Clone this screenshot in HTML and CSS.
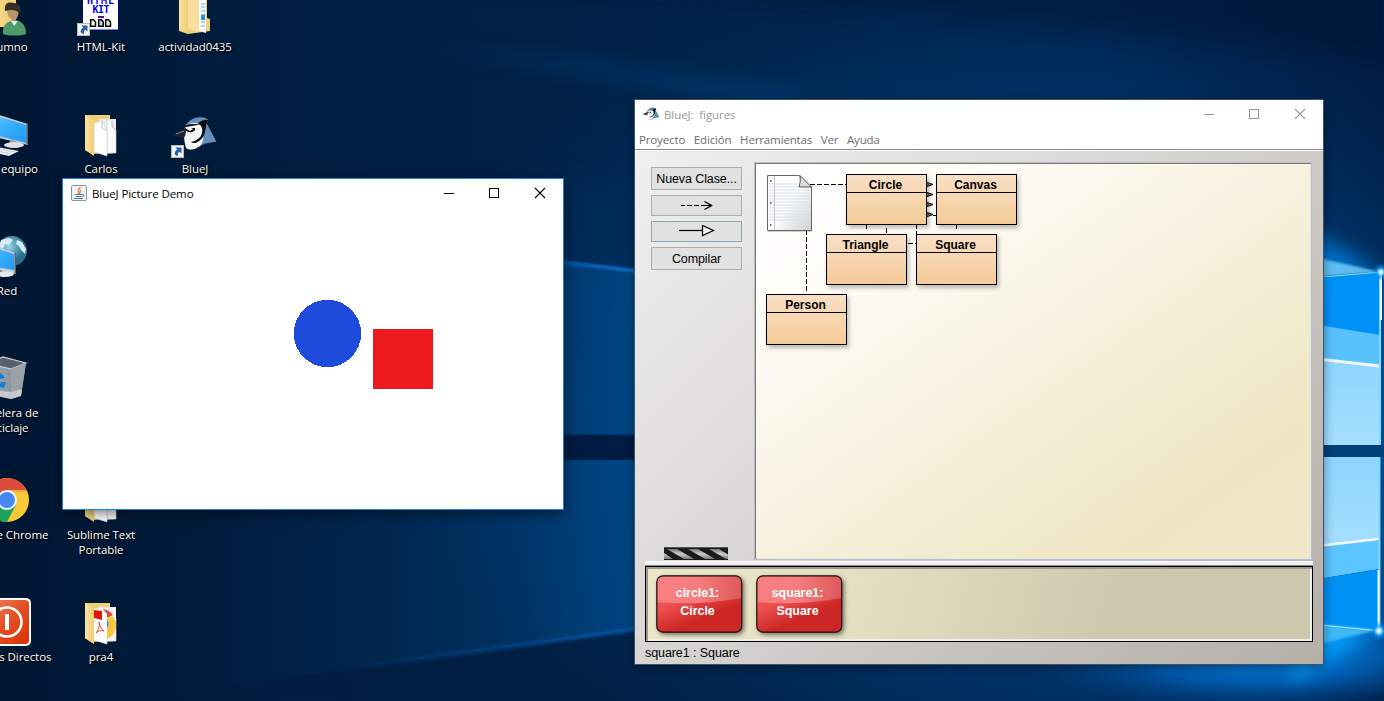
FILE: index.html
```html
<!DOCTYPE html>
<html lang="es">
<head>
<meta charset="utf-8">
<title>Escritorio</title>
<link rel="stylesheet" href="styles.css">
</head>
<body>
<div class="desktop">
  <svg class="wallpaper" width="1384" height="701" viewBox="0 0 1384 701" aria-hidden="true">
    <defs>
      <linearGradient id="sky" x1="0" y1="0" x2="1" y2="0">
        <stop offset="0" stop-color="#001733"/><stop offset=".2" stop-color="#001d3f"/><stop offset=".5" stop-color="#00234a"/><stop offset=".8" stop-color="#002450"/><stop offset="1" stop-color="#001c42"/>
      </linearGradient>
      <radialGradient id="glow" gradientUnits="userSpaceOnUse" cx="1010" cy="400" r="620" gradientTransform="translate(0 130) scale(1 .68)">
        <stop offset="0" stop-color="#005aa6"/><stop offset=".5" stop-color="#00478a" stop-opacity=".7"/><stop offset="1" stop-color="#003a75" stop-opacity="0"/>
      </radialGradient>
      <linearGradient id="pane" x1="0" y1="0" x2="1" y2="0">
        <stop offset="0" stop-color="#00356b" stop-opacity="0"/><stop offset=".7" stop-color="#004684" stop-opacity=".45"/><stop offset="1" stop-color="#005095" stop-opacity=".8"/>
      </linearGradient>
      <linearGradient id="ray" x1="0" y1="0" x2="1" y2="0">
        <stop offset="0" stop-color="#0a6fd8" stop-opacity="0"/><stop offset="1" stop-color="#0a78e0"/>
      </linearGradient>
      <linearGradient id="shade" x1="0" y1="0" x2="1" y2="0"><stop offset="0" stop-color="#001b3d" stop-opacity=".3"/><stop offset=".5" stop-color="#001b3d" stop-opacity=".35"/><stop offset="1" stop-color="#001b3d" stop-opacity="0"/></linearGradient>
      <radialGradient id="flare"><stop offset="0" stop-color="#fff"/><stop offset=".2" stop-color="#b5ecff"/><stop offset=".5" stop-color="#0a9cff" stop-opacity=".7"/><stop offset="1" stop-color="#0078e0" stop-opacity="0"/></radialGradient>
      <radialGradient id="floor"><stop offset="0" stop-color="#008cf5"/><stop offset=".5" stop-color="#0068c4" stop-opacity=".75"/><stop offset="1" stop-color="#004a94" stop-opacity="0"/></radialGradient>
      <linearGradient id="glass" x1="0" y1="0" x2="0" y2="1"><stop offset="0" stop-color="#8ed5ff"/><stop offset="1" stop-color="#a6dfff"/></linearGradient>
      <filter id="soft" x="-20%" y="-50%" width="140%" height="200%"><feGaussianBlur stdDeviation="9"/></filter>
      <filter id="soft1" x="-20%" y="-50%" width="140%" height="200%"><feGaussianBlur stdDeviation="1"/></filter>
    </defs>
    <rect width="1384" height="701" fill="url(#sky)"/>
    <rect width="1384" height="701" fill="url(#glow)"/>
    <path d="M380 -20L1384 -20V60L900 10Z" fill="#001531" opacity=".5" filter="url(#soft)"/>
    <path d="M420 45L800 118V90L600 60Z" fill="#004a8c" opacity=".3" filter="url(#soft)"/>
    <path d="M560 170L660 200V272L560 262Z" fill="#002a58" opacity=".5" filter="url(#soft)"/>
    <path d="M300 225L660 272V435H300Z" fill="url(#pane)"/>
    <path d="M450 248L660 272V275L450 252Z" fill="url(#ray)" filter="url(#soft1)"/>
    <rect y="435" width="700" height="25" fill="#001737" opacity=".78" filter="url(#soft1)"/>
    <path d="M200 460H660V626L200 690Z" fill="url(#pane)"/>
    <path d="M200 690L660 625H1100V701H200Z" fill="url(#shade)"/>
    <path d="M330 669L660 624V628L330 675Z" fill="url(#ray)" opacity=".5" filter="url(#soft1)"/>
    <ellipse cx="1265" cy="655" rx="235" ry="58" fill="url(#floor)"/>
    <path d="M1300 225L1381 270L1300 290Z" fill="#0088ed" opacity=".7" filter="url(#soft)"/>
    <path d="M1290 682L1381 631L1300 620Z" fill="#00a0ff" opacity=".9" filter="url(#soft)"/>
    <path d="M1300 254L1381 272L1300 278Z" fill="#75d3ff" opacity=".8" filter="url(#soft1)"/>
    <rect x="1381" y="276" width="3" height="354" fill="#004b91"/>
    <path d="M1300 280L1381 272V340L1300 326Z" fill="#0092f8"/>
    <path d="M1300 322L1380 335V368H1300Z" fill="#58c2ff"/>
    <path d="M1300 358L1380 367V445H1300Z" fill="url(#glass)"/>
    <path d="M1300 357L1380 366" stroke="#fff" stroke-width="3" opacity=".9"/>
    <rect x="1300" y="445" width="84" height="12" fill="#00407c"/>
    <path d="M1300 457H1380V540L1300 548Z" fill="url(#glass)"/>
    <path d="M1300 548L1380 540V569L1300 582Z" fill="#5cc4ff"/>
    <path d="M1300 582L1380 569V632L1300 624Z" fill="#0091f5"/>
    <path d="M1300 548L1379 539" stroke="#fff" stroke-width="2.5" opacity=".9"/>
    <path d="M1300 622L1380 630L1300 648Z" fill="#54c8ff" opacity=".75" filter="url(#soft1)"/>
    <path d="M1300 279L1381 272" stroke="#81e4ff"/>
    <path d="M1300 623L1381 631" stroke="#9bedff"/>
    <path d="M1380 272V445M1379.500 457V630" stroke="#7fdcff" stroke-width="2"/>
    <path d="M1381 272V320M1378.500 570V632" stroke="#e8fbff" stroke-width="2"/>
    <circle cx="1381" cy="272" r="9" fill="url(#flare)"/>
    <circle cx="1379" cy="631" r="10" fill="url(#flare)"/>
  </svg>

  <svg width="0" height="0" class="defs" aria-hidden="true">
    <defs>
      <linearGradient id="fold" x1="0" y1="0" x2="1" y2="0"><stop offset="0" stop-color="#fbe3a0"/><stop offset="1" stop-color="#f1cd74"/></linearGradient>
      <linearGradient id="screen" x1="0" y1="0" x2="1" y2="1"><stop offset="0" stop-color="#8ad4ff"/><stop offset=".5" stop-color="#38aefc"/><stop offset="1" stop-color="#1e9bf5"/></linearGradient>
      <linearGradient id="power" x1="0" y1="0" x2="1" y2="1"><stop offset="0" stop-color="#f08a68"/><stop offset=".5" stop-color="#e35025"/><stop offset="1" stop-color="#d83200"/></linearGradient>
      <linearGradient id="binfill" x1="0" y1="0" x2="1" y2="0"><stop offset="0" stop-color="#a7adb3"/><stop offset="1" stop-color="#7d868e"/></linearGradient>
      <radialGradient id="globe" cx=".4" cy=".35"><stop offset="0" stop-color="#9fd3e6"/><stop offset=".6" stop-color="#4f9ab8"/><stop offset="1" stop-color="#2c6d8c"/></radialGradient>
      <symbol id="shortcut" viewBox="0 0 13 13">
        <rect x=".5" y=".5" width="12" height="12" fill="#f4f4f4" stroke="#b9b9b9"/>
        <path d="M4.500 2.500H10.500V8.500L8.500 6.800C7 7.500 6.500 9 7 11C3 10.500 2.500 7 6.200 4.500Z" fill="#2c62a8"/>
      </symbol>
      <symbol id="folder" viewBox="0 0 48 48">
        <path d="M8 5H33V42L17 44L8 40Z" fill="#efcf79"/>
        <path d="M22 9H39V43L24 44Z" fill="#e9ebed"/>
        <path d="M30 10H35V16L39 20V43H30Z" fill="#fbfbfb" stroke="#cfd1d3" stroke-width=".6"/>
        <path d="M17 13L25 11L30 20V46L17 42Z" fill="#fff" stroke="#c9cbcd" stroke-width=".6"/>
        <path d="M25 11V18L30 20M35 11V17L39 20" fill="none" stroke="#b7babc" stroke-width=".8"/>
        <path d="M8 5L17 12V46L8 40Z" fill="url(#fold)"/>
      </symbol>
      <symbol id="jay" viewBox="0 0 48 48">
        <path d="M14 16C18 9 25 6 31 7C34 7 36 8 38 10L36 13L46 32L34 34L24 39L18 40L32 24L30 14Z" fill="#6390bd" stroke="#0c141c" stroke-width=".8"/>
        <path d="M14 17C12 23 13 31 15 38C19 41 25 39 29 36C34 30 33 20 29 14C23 12 17 13 14 17Z" fill="#f6f7f8"/>
        <path d="M38 10C32 9 28 12 27 14C31 15 32 18 31 23C30 28 25 31 20 32C22 34 26 33 28 31C34 27 34 21 35 18C35 14 36 12 38 10Z" fill="#0b0d10"/>
        <path d="M13 18C17 12 24 15 30 14C27 16 19 15 13 18Z" fill="#0b0d10"/>
        <path d="M14 18L19 21L22 19L20 18H24V20C22 23 17 23 14 20Z" fill="#101214"/>
        <path d="M15 18L2 25C6 28 10 26 13 28C15 25 15 21 15 18Z" fill="#1d2228"/>
        <path d="M5 24L13 21" stroke="#868c92" fill="none"/>
      </symbol>
      <linearGradient id="gloss" x1="0" y1="0" x2="1" y2="0"><stop offset="0" stop-color="#fa8080"/><stop offset=".5" stop-color="#f57d7d"/><stop offset="1" stop-color="#de5858"/></linearGradient>
      <linearGradient id="gem" x1="0" y1="0" x2=".6" y2="1"><stop offset="0" stop-color="#fa6a6a"/><stop offset=".45" stop-color="#ee5050"/><stop offset=".8" stop-color="#cc2626"/></linearGradient>
    </defs>
  </svg>

  <div class="icons">
    <div class="icon c1 r1">
      <svg width="48" height="48" viewBox="0 0 48 48">
        <path d="M4 0H33V36L4 39Z" fill="#f3d27e"/><path d="M4 0H26V39H4Z" fill="url(#fold)"/>
        <path d="M20 46C19 36 25 33 32 32C39 33 43 37 43 46C38 48 26 48 20 46Z" fill="#4e9a6d"/><path d="M28 33L31 38L35 33Z" fill="#e2efe4"/>
        <path d="M24 20C24 14 36 14 36 21C36 27 34 31 31 33C26 31 24 27 24 20Z" fill="#b8946f"/><path d="M22 23C21 14 26 14 31 15C38 15 39 23 36 26C35 22 29 21 22 23Z" fill="#35302c"/>
      </svg>
      <span class="label">Alumno</span>
    </div>
    <div class="icon c1 r2">
      <svg width="48" height="48" viewBox="0 0 48 48">
        <path d="M0 0L45 14V35L0 24Z" fill="#c7ccd0"/><path d="M0 2L43.500 15V33L0 22Z" fill="url(#screen)"/><path d="M43.500 14L45 14.500V35L43.500 34Z" fill="#545b61"/>
        <path d="M27 29L33 31V34L27 33Z" fill="#9aa0a5"/><ellipse cx="31" cy="35" rx="10" ry="3" fill="#dfe2e5"/>
        <path d="M4 35L36 41L26 46L0 40Z" fill="#eceff1"/><path d="M8 37L32 42M6 39L28 44" stroke="#b8bdc1" stroke-dasharray="2 1"/>
      </svg>
      <span class="label">Este equipo</span>
    </div>
    <div class="icon c1 r3">
      <svg width="48" height="48" viewBox="0 0 48 48">
        <circle cx="29" cy="19" r="15" fill="url(#globe)"/><path d="M18 8L26 6L30 8L26 13L22 12L20 17L16 15ZM34 8L39 10L43 17L42 22L38 18L36 14L33 12Z" fill="#d6ecf3"/>
        <path d="M0 10L33 21V42L0 35Z" fill="#c9ced2"/><path d="M0 12L31 22V38L0 33Z" fill="url(#screen)"/><path d="M31.500 20L33 21V42L31.500 41Z" fill="#596168"/><ellipse cx="22" cy="42" rx="9" ry="3" fill="#e5e8ea"/>
      </svg>
      <span class="label">Red</span>
    </div>
    <div class="icon c1 r4">
      <svg width="48" height="48" viewBox="0 0 48 48">
        <path d="M4 9L20 3L43 9L38 41L28 45L9 41Z" fill="url(#binfill)"/><path d="M4 9L20 3L43 9L28 15Z" fill="#59626a" stroke="#cdd2d6" stroke-width="1.200"/><path d="M28 15L43 9L38 42L28 45Z" fill="#99a0a7"/><path d="M10 36L28 38L39 35L38 42L28 45L10 41Z" fill="#d5d8db" opacity=".75"/>
        <path d="M13 20L17 18L22 24L17 25ZM18 28L23 28L21 34L16 33ZM7 25L11 24L14 31L9 31Z" fill="#0d82e0"/>
      </svg>
      <span class="label">Papelera de<br>reciclaje</span>
    </div>
    <div class="icon c1 r5">
      <svg width="48" height="48" viewBox="0 0 48 48">
        <circle cx="24" cy="24" r="22" fill="#fbc938"/><path d="M5 13A22 22 0 0 1 43.300 14H24L14 28Z" fill="#dd4b3e"/><path d="M5 13A22 22 0 0 0 24 46L33.500 28L15 30Z" fill="#1ba25d"/><path d="M24 14H43.300L44 16H34Z" fill="#d4a52c" opacity=".6"/><circle cx="24" cy="24" r="10" fill="#f4f4f4"/><circle cx="24" cy="24" r="8" fill="#4688f1"/>
      </svg>
      <span class="label">Google Chrome</span>
    </div>
    <div class="icon c1 r6">
      <svg width="48" height="48" viewBox="0 0 48 48">
        <rect x="0" y="0" width="48" height="48" rx="5" fill="#fff"/><rect x="2" y="2" width="44" height="44" rx="4" fill="url(#power)"/><circle cx="24" cy="24" r="14.500" fill="none" stroke="#fff" stroke-width="2.500"/><rect x="22" y="16" width="4" height="16" fill="#fff"/>
      </svg>
      <span class="label">Accesos Directos</span>
    </div>

    <div class="icon c2 r1">
      <svg width="48" height="48" viewBox="0 0 48 48">
        <rect x="5.500" y="-2" width="36" height="44" fill="#fff" stroke="#000a80"/><text x="10" y="16" class="kit" textLength="27">HTML</text><text x="15.500" y="25" class="kit" textLength="17">KIT</text>
        <rect x="21" y="28" width="6" height="2" fill="#800080"/>
        <g fill="#f6f6dc" stroke="#000" stroke-width="1.500"><path d="M13.700 31.700H16.500L18.500 34V38.300H13.700Z"/><path d="M21.700 31.700H24.500L26.300 34V38.300H21.700Z" fill="#bcd3f4"/><path d="M28.700 31.700H31.500L33.500 34V38.300H28.700Z" fill="#dff4df"/></g>
        <use href="#shortcut" x="0" y="35" width="13" height="13"/>
      </svg>
      <span class="label">HTML-Kit</span>
    </div>
    <div class="icon c2 r2">
      <svg width="48" height="48" viewBox="0 0 48 48"><use href="#folder"/></svg>
      <span class="label">Carlos</span>
    </div>
    <div class="icon c2 r5">
      <svg width="48" height="48" viewBox="0 0 48 48"><use href="#folder"/></svg>
      <span class="label">Sublime Text<br>Portable</span>
    </div>
    <div class="icon c2 r6">
      <svg width="48" height="48" viewBox="0 0 48 48"><use href="#folder"/>
        <path d="M24 10H39V43H30Z" fill="#f4f4f4"/><path d="M24 11A14 14 0 0 1 36 17L30 20Z" fill="#dd4b3e"/><path d="M30 19H36.500A15 15 0 0 1 30 41Z" fill="#fbc938"/><path d="M30 22A4 5 0 0 1 30 30Z" fill="#4688f1"/>
        <path d="M17 11L25 10L30 16V46L17 42Z" fill="#fdfdfd"/><path d="M17 12L25 13V22L17 20Z" fill="#e1180c"/><path d="M19 35C22 31 23 27 22 24C23 29 25 32 27 33C24 32 21 33 19 35Z" fill="none" stroke="#e9483d"/>
        <path d="M8 5L17 12V46L8 40Z" fill="url(#fold)"/>
      </svg>
      <span class="label">pra4</span>
    </div>

    <div class="icon c3 r1">
      <svg width="48" height="48" viewBox="0 0 48 48">
        <path d="M8 0H36V30L39 31V43L17 46L8 43Z" fill="#efcf79"/><path d="M28 4L35 12V45L28 43Z" fill="#f7f8f9"/><path d="M30 16H34M30 19H34M30 23H34M30 34H34M30 38H34" stroke="#79b5d8"/><path d="M30 27L34 26V32H30Z" fill="#2a8fd0"/><path d="M17 0H28V44L17 41Z" fill="#f9df9d"/><path d="M8 0L17 5V46L8 41Z" fill="url(#fold)"/>
      </svg>
      <span class="label">actividad0435</span>
    </div>
    <div class="icon c3 r2">
      <svg width="48" height="48" viewBox="0 0 48 48"><use href="#jay"/><use href="#shortcut" x="0" y="35" width="13" height="13"/></svg>
      <span class="label">BlueJ</span>
    </div>
  </div>

  <section class="window demo">
    <header class="titlebar">
      <svg class="appicon" width="16" height="16" viewBox="0 0 16 16">
        <rect x=".5" y=".5" width="15" height="15" rx="1" fill="#edf2f6" stroke="#8296a8"/><path d="M9.500 2C5.500 5 9.500 6 7 9M10.500 5C8 6.500 9.500 7.500 8.500 9" fill="none" stroke="#ee7f22" stroke-width="1.200"/><path d="M4 9.500H11M5 11.500H10M3 13.500H12M11 9.500C14 9 13.500 11.500 10.500 11.500" fill="none" stroke="#4a7896"/>
      </svg>
      <h1 class="title">BlueJ Picture Demo</h1>
      <svg class="controls" width="137" height="30" viewBox="0 0 137 30">
        <path d="M18 14.500H28" stroke="#000"/><rect x="63.500" y="9.500" width="9" height="9" fill="none" stroke="#000"/><path d="M109 9L119 19M119 9L109 19" stroke="#000" stroke-width="1.100"/>
      </svg>
    </header>
    <svg class="picture" width="500" height="300" viewBox="0 0 500 300">
      <circle cx="264.500" cy="124.500" r="33.700" fill="#1e4bdc" shape-rendering="crispEdges"/><rect x="310" y="120" width="60" height="60" fill="#ec1a1a"/>
    </svg>
  </section>

  <section class="window project">
    <header class="titlebar">
      <svg class="appicon" width="16" height="16" viewBox="2 2 44 44"><use href="#jay" width="48" height="48"/></svg>
      <h1 class="title">BlueJ:&nbsp; figures</h1>
      <svg class="controls" width="137" height="30" viewBox="0 0 137 30">
        <path d="M18 14.500H28" stroke="#999"/><rect x="63.500" y="9.500" width="9" height="9" fill="none" stroke="#999"/><path d="M109 9L119 19M119 9L109 19" stroke="#999" stroke-width="1.100"/>
      </svg>
    </header>
    <nav class="menu"><span>Proyecto</span><span>Edición</span><span>Herramientas</span><span>Ver</span><span>Ayuda</span></nav>
    <div class="body">
      <div class="upper">
        <aside class="tools">
          <button class="tool text">Nueva Clase...</button>
          <button class="tool"><svg width="35" height="11" viewBox="0 0 35 11"><path d="M2 5.500H6M8 5.500H13M15 5.500H20M22 5.500H32" stroke="#000" stroke-width="1.200"/><path d="M25.500 1.500L32.500 5.500L25.500 9.500" fill="none" stroke="#000" stroke-width="1.400"/></svg></button>
          <button class="tool focus"><svg width="37" height="13" viewBox="0 0 37 13"><path d="M1 5.500H24" stroke="#000" stroke-width="1.200"/><path d="M24.500 0.500L35.500 5.500L24.500 10.500Z" fill="#f2f2f2" stroke="#000" stroke-width="1.200"/></svg></button>
          <button class="tool text">Compilar</button>
          <svg class="progress" width="64" height="13" viewBox="0 0 64 13">
            <defs><linearGradient id="stripe" x1="0" y1="0" x2="0" y2="1"><stop offset="0" stop-color="#777"/><stop offset=".5" stop-color="#ccc"/><stop offset="1" stop-color="#777"/></linearGradient></defs>
            <rect width="64" height="13" fill="#1a1a1a"/><path d="M0 6L9 12H0ZM3 2H13L30 12H20ZM24 2H34L51 12H41ZM45 2H55L64 7.500V12H62Z" fill="url(#stripe)"/><path d="M0 .5H64" stroke="#555"/>
          </svg>
        </aside>
        <div class="diagram">
          <svg class="wires" width="555" height="395" viewBox="0 0 555 395">
            <g fill="none" stroke="#000" stroke-dasharray="5 2" shape-rendering="crispEdges">
              <path d="M54 20.500H90"/><path d="M50.500 66V127"/><path d="M110.500 60V66"/><path d="M130.500 64V71"/><path d="M160.500 60V84"/><path d="M200.500 60V66"/><path d="M152 79.500H160"/><path d="M170 51.500H180"/>
            </g>
            <g fill="#666" stroke="#111"><path d="M170 18L177 20.500L170 23M170 28L177 30.500L170 33M170 38L177 40.500L170 43M170 48L177 50.500L170 53"/></g>
          </svg>
          <svg class="note" width="48" height="60" viewBox="0 0 48 60">
            <defs><linearGradient id="paper" x1="0" y1="0" x2="1" y2="1"><stop offset=".5" stop-color="#fdfdfd"/><stop offset="1" stop-color="#cfcfd2"/></linearGradient></defs>
            <path d="M2 3H35L46 14V58H2Z" fill="#000" opacity=".18"/><path d="M1.500 1.500H33L45.500 13V56.500H1.500Z" fill="url(#paper)" stroke="#666"/>
            <path d="M3 10H31M3 13H32M3 16H44M3 19H44M3 22H44M3 25H44M3 28H44M3 31H44M3 34H44M3 37H44M3 40H44M3 43H44M3 46H44" stroke="#cde0ea" stroke-width=".9"/><path d="M8.500 2V56" stroke="#d6bfb6"/><path d="M4 7H5.500M4 29H5.500M4 51H5.500" stroke="#777" stroke-width="2"/>
            <path d="M34 1.500L45.500 13H33Q35 8 34 1.500Z" fill="#dcdcdc" stroke="#555"/>
          </svg>
          <div class="class circle">Circle</div>
          <div class="class canvas">Canvas</div>
          <div class="class triangle">Triangle</div>
          <div class="class square">Square</div>
          <div class="class person">Person</div>
        </div>
      </div>
      <div class="bench">
        <div class="object">
          <svg class="gem" width="88" height="60" viewBox="0 0 88 60"><rect x=".8" y=".8" width="84.900" height="56.400" rx="6" fill="url(#gem)"/><path d="M1.500 23V7Q2 1.500 7 1.500H80Q85 1.500 85 7V23Q43 31 1.500 27Z" fill="url(#gloss)"/><rect x=".8" y=".8" width="84.900" height="56.400" rx="6" fill="none" stroke="#171010" stroke-width="1.200"/></svg>
          <span class="caption">circle1:<br>Circle</span>
        </div>
        <div class="object">
          <svg class="gem" width="88" height="60" viewBox="0 0 88 60"><rect x=".8" y=".8" width="84.900" height="56.400" rx="6" fill="url(#gem)"/><path d="M1.500 23V7Q2 1.500 7 1.500H80Q85 1.500 85 7V23Q43 31 1.500 27Z" fill="url(#gloss)"/><rect x=".8" y=".8" width="84.900" height="56.400" rx="6" fill="none" stroke="#171010" stroke-width="1.200"/></svg>
          <span class="caption">square1:<br>Square</span>
        </div>
      </div>
      <footer class="status">square1 : Square</footer>
    </div>
  </section>
</div>
</body>
</html>
```
FILE: styles.css
```css
* { box-sizing: border-box; }
body { margin: 0; overflow: hidden; }
svg { display: block; }

.desktop {
  position: relative;
  width: 1384px;
  height: 701px;
  overflow: hidden;
  background: #001c3c;
  font-family: "Open Sans", "Noto Sans", sans-serif;
  font-size: 11.5px;
  letter-spacing: -0.08px;
}
.wallpaper, .defs { position: absolute; left: 0; top: 0; }

/* Desktop shortcuts, partly beyond the left and top edges */
.icons {
  position: absolute;
  left: -40px;
  top: -12px;
  display: grid;
  grid-template-columns: repeat(3, 94px);
  grid-template-rows: repeat(6, 122px);
}
.icon { display: flex; flex-direction: column; align-items: center; gap: 3px; }
.c1 { grid-column: 1; } .c2 { grid-column: 2; } .c3 { grid-column: 3; }
.r1 { grid-row: 1; } .r2 { grid-row: 2; } .r3 { grid-row: 3; }
.r4 { grid-row: 4; } .r5 { grid-row: 5; } .r6 { grid-row: 6; }
.label {
  color: #fff;
  line-height: 15px;
  text-align: center;
  white-space: nowrap;
  text-shadow: 1px 1px 2px #000, 0 0 2px #000;
}
.kit { font: bold 10px "DejaVu Sans Mono", monospace; fill: #0000e8; }

.window { position: absolute; display: flex; flex-direction: column; background: #fff; }
.titlebar { display: flex; height: 30px; flex: none; }
.appicon { margin: 6px 0 0 8px; }
.title { margin: 0 0 0 5px; font-size: 11.5px; font-weight: 400; line-height: 30px; white-space: nowrap; }
.controls { margin-left: auto; }

.demo {
  left: 62px;
  top: 178px;
  width: 502px;
  height: 332px;
  border: 1px solid #1883d7;
  box-shadow: 0 3px 12px rgba(0, 0, 0, .55);
}

.project {
  left: 634px;
  top: 99px;
  width: 690px;
  height: 566px;
  border: 1px solid #3d5168;
  box-shadow: 0 3px 10px rgba(0, 0, 0, .4);
}
.project .title { color: #999; }
.menu {
  display: flex;
  gap: 8.6px;
  height: 19px;
  flex: none;
  padding-left: 4px;
  color: #6d6d6d;
  line-height: 20px;
  letter-spacing: -0.14px;
}
.body {
  flex: 1;
  display: flex;
  flex-direction: column;
  padding: 11px 10px 0 10px;
  border-top: 1px solid #8d8d8d;
  box-shadow: inset 0 1px #fff;
  background: linear-gradient(135deg, #f0f0f0 0%, #dddcda 35%, #c4c0bb 72%, #b5afa8 100%);
}
.upper { display: flex; height: 399px; margin-top: 1px; }
.tools { display: flex; flex-direction: column; width: 109px; padding: 5px 0 0 6px; }
.tool {
  display: flex;
  align-items: center;
  justify-content: center;
  width: 91px;
  height: 21px;
  margin: 0 0 5px;
  padding: 0;
  border: 1px solid #adadad;
  background: #e1e1e1;
  color: #000;
  font: 12.5px "Liberation Sans", Arial, sans-serif;
  letter-spacing: -0.1px;
}
.tool.text { height: 23px; }
.tool.focus { border-color: #8ba6b7; }
.progress { margin: auto 0 1px 13px; }
.diagram {
  position: relative;
  width: 558px;
  height: 398px;
  border: 1px solid #bcbec0;
  box-shadow: inset 1px 1px #77787c, inset -1px -1px #e2e6ec;
  background: linear-gradient(145deg, #fff 0%, #fefdf8 18%, #f7f1df 50%, #efe6c3 82%, #f0e7c8 100%);
}
.wires { position: absolute; left: 1px; top: 1px; }
.note { position: absolute; left: 11px; top: 11px; }
.class {
  position: absolute;
  width: 81px;
  height: 51px;
  padding: 1px 2px 0 0;
  border: 1px solid #000;
  background: linear-gradient(#000, #000) 0 17px / 100% 1px no-repeat, linear-gradient(#f8dfc5, #f4cb98);
  box-shadow: 2px 3px 4px rgba(0, 0, 0, .25);
  font: bold 12px/19px "Liberation Sans", Arial, sans-serif;
  letter-spacing: 0;
  text-align: center;
}
.circle { left: 91px; top: 11px; }
.canvas { left: 181px; top: 11px; }
.triangle { left: 71px; top: 71px; }
.square { left: 161px; top: 71px; }
.person { left: 11px; top: 131px; }

.bench {
  display: flex;
  gap: 14px;
  height: 76px;
  margin-top: 5px;
  padding: 8px 0 0 10px;
  border: 1px solid #000;
  box-shadow: inset 2px 2px #999993, inset -2px -2px #eef0f0, 0 -1px #8a8a8a, 0 -4px #efefef, 0 -5px #fff;
  background: linear-gradient(105deg, #ede7c9 0%, #e6e0c2 30%, #cfc8af 70%, #cec7ae 100%);
}
.object { display: grid; width: 86px; height: 60px; }
.gem { grid-area: 1 / 1; filter: drop-shadow(2px 2px 2px rgba(0, 0, 0, .5)); }
.caption {
  grid-area: 1 / 1;
  z-index: 1;
  padding: 9px 5px 0 0;
  color: #fff;
  font: bold 12.5px/18px "Liberation Sans", Arial, sans-serif;
  letter-spacing: -0.05px;
  text-align: center;
}
.status { padding-top: 3px; font: 12.5px/16px "Liberation Sans", Arial, sans-serif; }
```
